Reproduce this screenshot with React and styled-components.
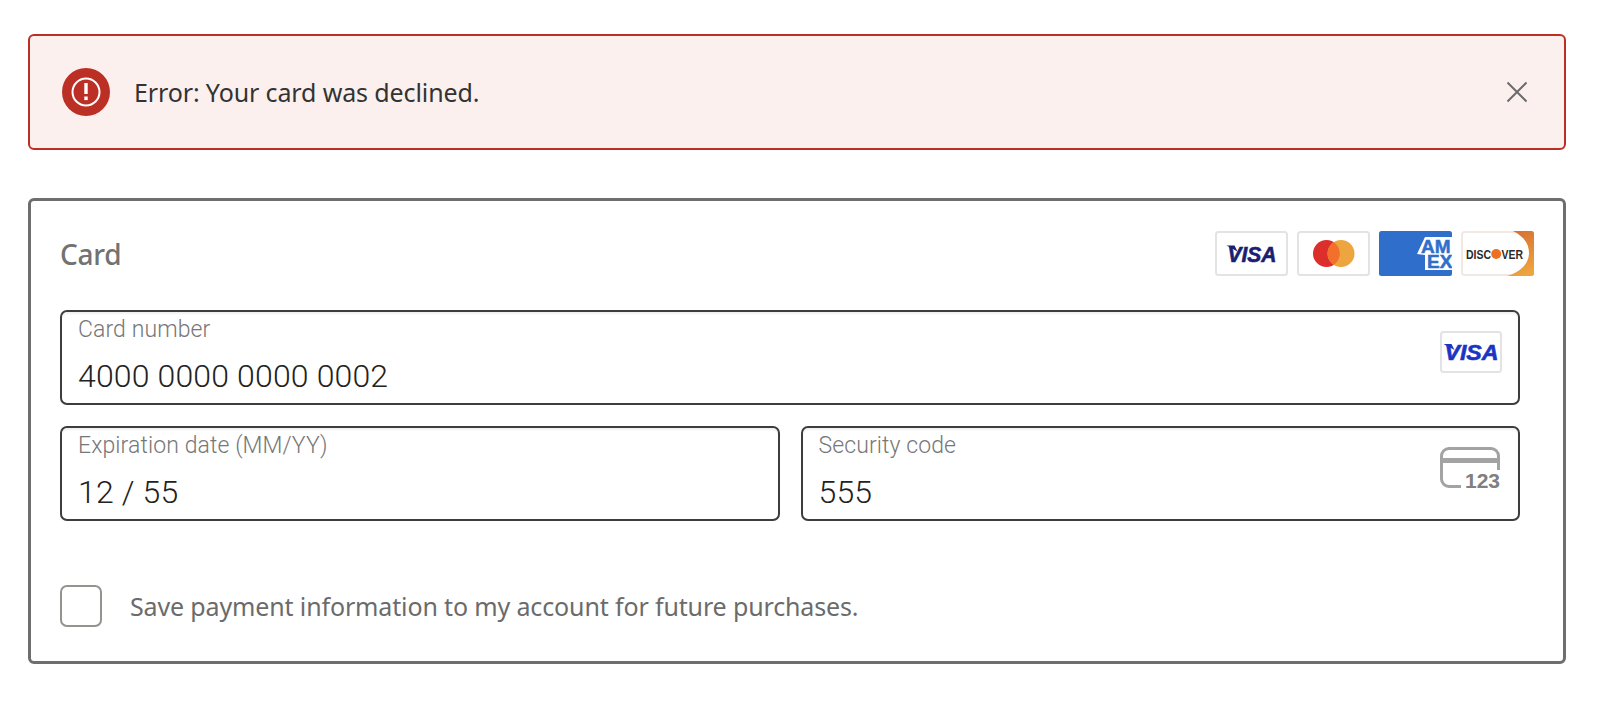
import React from "react";
import styled, { createGlobalStyle } from "styled-components";

const GlobalStyle = createGlobalStyle`
  html, body {
    margin: 0;
    padding: 0;
    background: #fff;
  }
  * {
    box-sizing: border-box;
  }
`;

const Page = styled.div`
  display: flex;
  flex-direction: column;
  gap: 48px;
  padding: 34px 38px 0 28px;
  height: 702px;
  overflow: hidden;
  font-family: "Noto Sans", sans-serif;
`;

const Alert = styled.div`
  display: flex;
  align-items: center;
  height: 116px;
  padding: 0 35px 0 32px;
  border: 2px solid #bc2f25;
  border-radius: 6px;
  background: #fcf0ef;
`;

const AlertIcon = styled.svg`
  flex: none;
  width: 48px;
  height: 48px;
  margin-right: 24px;
`;

const AlertText = styled.span`
  flex: 1;
  font-size: 25px;
  letter-spacing: -0.12px;
  color: #333;
`;

const CloseIcon = styled.svg`
  flex: none;
  width: 24px;
  height: 24px;
`;

const Card = styled.section`
  display: flex;
  flex-direction: column;
  height: 466px;
  padding: 30px 29px 0;
  border: 3px solid #6e6e6e;
  border-radius: 6px;
`;

const CardHead = styled.div`
  display: flex;
  align-items: center;
  justify-content: space-between;
  height: 45px;
`;

const CardTitle = styled.h2`
  margin: 0;
  font-size: 28px;
  font-weight: 500;
  letter-spacing: -0.3px;
  color: #727272;
`;

const Brands = styled.div`
  display: flex;
  gap: 9px;
`;

const Fields = styled.div`
  display: flex;
  flex-direction: column;
  gap: 21px;
  margin: 34px 14px 0 0;
`;

const FieldRow = styled.div`
  display: flex;
  gap: 21px;
`;

const Field = styled.div`
  display: flex;
  flex: 1;
  align-items: center;
  justify-content: space-between;
  height: 95px;
  padding: 0 16px;
  border: 2px solid #3d3d3d;
  border-radius: 7px;
  box-shadow: inset 0 2px 2px rgba(0, 0, 0, 0.06);
  font-family: Roboto, "Liberation Sans", sans-serif;
`;

const FieldText = styled.div`
  display: flex;
  flex-direction: column;
  align-self: flex-start;
`;

const FieldLabel = styled.label`
  margin-top: 5px;
  font-size: 23px;
  font-weight: 300;
  line-height: 26px;
  letter-spacing: 0.1px;
  color: #777;
`;

const FieldValue = styled.span`
  margin-top: 15px;
  font-size: 32px;
  font-weight: 300;
  line-height: 36px;
  letter-spacing: 0.15px;
  color: #222;
`;

const SaveRow = styled.label`
  display: flex;
  align-items: center;
  gap: 28px;
  margin-top: 64px;
`;

const Checkbox = styled.span`
  flex: none;
  width: 42px;
  height: 42px;
  border: 2px solid #94938e;
  border-radius: 7px;
`;

const SaveText = styled.span`
  font-size: 25px;
  letter-spacing: -0.14px;
  color: #6b6b6b;
`;

const BrandBadge = styled.svg`
  display: block;
  flex: none;
  width: ${(p) => p.$w}px;
  height: ${(p) => p.$h}px;
  margin: 0 ${(p) => p.$right || 0}px ${(p) => p.$lift || 0}px 0;
`;

function Visa({ w = 73, h = 45, textWidth = 50, lift, color }) {
  const left = (w - textWidth) / 2;
  const base = h / 2 + 8;
  return (
    <BrandBadge $w={w} $h={h} $lift={lift} viewBox={`0 0 ${w} ${h}`}>
      <rect x="1" y="1" width={w - 2} height={h - 2} rx="2.5" fill="#fff" stroke="#e3e3e3" strokeWidth="2" />
      <path d={`M${left} ${base - 16}h8l3 6z`} fill={color} />
      <text
        x={left + 1}
        y={base}
        textLength={textWidth - 1}
        lengthAdjust="spacingAndGlyphs"
        fontFamily="Liberation Sans"
        fontWeight="700"
        fontStyle="italic"
        fontSize="22"
        stroke={color}
        strokeWidth="0.6"
        fill={color}
      >
        VISA
      </text>
    </BrandBadge>
  );
}

function Mastercard() {
  return (
    <BrandBadge $w={73} $h={45} viewBox="0 0 73 45">
      <rect x="1" y="1" width="71" height="43" rx="2.5" fill="#fff" stroke="#e3e3e3" strokeWidth="2" />
      <circle cx="29.5" cy="22.5" r="13.5" fill="#dc2e2b" />
      <circle cx="44" cy="22.5" r="13.5" fill="#eda53f" />
      <path d="M36.7 11.2a13.5 13.5 0 0 1 0 22.6a13.5 13.5 0 0 1 0-22.6z" fill="#f2702c" />
    </BrandBadge>
  );
}

function Amex() {
  return (
    <BrandBadge $w={73} $h={45} viewBox="0 0 73 45">
      <defs>
        <clipPath id="amexClip">
          <rect width="73" height="45" rx="2.5" />
        </clipPath>
      </defs>
      <g clipPath="url(#amexClip)">
        <rect width="73" height="45" fill="#2f6fcb" />
        <path d="M38 23 46 6H73V39H46V24z" fill="#fff" />
        <text x="42" y="22" fontFamily="Liberation Sans" fontWeight="700" fontSize="19" stroke="#2f6fcb" strokeWidth="0.5" fill="#2f6fcb">
          AM
        </text>
        <text x="48" y="37" fontFamily="Liberation Sans" fontWeight="700" fontSize="19" stroke="#2f6fcb" strokeWidth="0.5" fill="#2f6fcb">
          EX
        </text>
      </g>
    </BrandBadge>
  );
}

function Discover() {
  return (
    <BrandBadge $w={73} $h={45} viewBox="0 0 73 45">
      <defs>
        <linearGradient id="discoverFill" x1="0.3" y1="0" x2="0.6" y2="1">
          <stop offset="0" stopColor="#d86f32" />
          <stop offset="1" stopColor="#eda53f" />
        </linearGradient>
      </defs>
      <rect x="1" y="1" width="71" height="43" rx="2.5" fill="#fff" stroke="#f3e8e1" strokeWidth="2" />
      <path d="M52 0H70.5Q73 0 73 2.5V42.5Q73 45 70.5 45H46C60 41 68 32 68 22S62 5 52 0z" fill="url(#discoverFill)" />
      <text x="5" y="27.5" textLength="25" lengthAdjust="spacingAndGlyphs" fontFamily="Liberation Sans" fontWeight="700" fontSize="12.5" fill="#2a2a2a">
        DISC
      </text>
      <circle cx="35.2" cy="23" r="5" fill="#ee6f22" />
      <text x="40.5" y="27.5" textLength="21.5" lengthAdjust="spacingAndGlyphs" fontFamily="Liberation Sans" fontWeight="700" fontSize="12.5" fill="#2a2a2a">
        VER
      </text>
    </BrandBadge>
  );
}

function CvcIcon() {
  return (
    <BrandBadge $w={60} $h={48} $right={2} $lift={6} viewBox="0 0 60 48">
      <path d="M58.5 23V9a7.5 7.5 0 0 0-7.5-7.5H9A7.5 7.5 0 0 0 1.5 9v23A7.5 7.5 0 0 0 9 39.5h12" fill="none" stroke="#a3a3a3" strokeWidth="3" />
      <rect x="1" y="11" width="58" height="5" fill="#a3a3a3" />
      <text x="60" y="41" textAnchor="end" fontFamily="Liberation Sans" fontWeight="700" fontSize="21" fill="#808080">
        123
      </text>
    </BrandBadge>
  );
}

export default function App() {
  return (
    <Page>
      <GlobalStyle />
      <Alert>
        <AlertIcon viewBox="0 0 48 48">
          <circle cx="24" cy="24" r="24" fill="#bc2f25" />
          <circle cx="24" cy="24" r="13.5" fill="none" stroke="#fff" strokeWidth="2" />
          <rect x="22.3" y="15" width="3.4" height="11" fill="#fff" />
          <rect x="22.3" y="28.5" width="3.4" height="3.6" fill="#fff" />
        </AlertIcon>
        <AlertText>Error: Your card was declined.</AlertText>
        <CloseIcon viewBox="0 0 24 24">
          <path d="M2.5 2.5 21.5 21.5M21.5 2.5 2.5 21.5" stroke="#6b6b6b" strokeWidth="2" fill="none" />
        </CloseIcon>
      </Alert>
      <Card>
        <CardHead>
          <CardTitle>Card</CardTitle>
          <Brands>
            <Visa color="#1a1f71" />
            <Mastercard />
            <Amex />
            <Discover />
          </Brands>
        </CardHead>
        <Fields>
          <FieldRow>
            <Field>
              <FieldText>
                <FieldLabel>Card number</FieldLabel>
                <FieldValue>4000 0000 0000 0002</FieldValue>
              </FieldText>
              <Visa w={62} h={42} textWidth={55} lift={12} color="#1a35c4" />
            </Field>
          </FieldRow>
          <FieldRow>
            <Field>
              <FieldText>
                <FieldLabel>Expiration date (MM/YY)</FieldLabel>
                <FieldValue>12 / 55</FieldValue>
              </FieldText>
            </Field>
            <Field>
              <FieldText>
                <FieldLabel>Security code</FieldLabel>
                <FieldValue>555</FieldValue>
              </FieldText>
              <CvcIcon />
            </Field>
          </FieldRow>
        </Fields>
        <SaveRow>
          <Checkbox />
          <SaveText>Save payment information to my account for future purchases.</SaveText>
        </SaveRow>
      </Card>
    </Page>
  );
}
